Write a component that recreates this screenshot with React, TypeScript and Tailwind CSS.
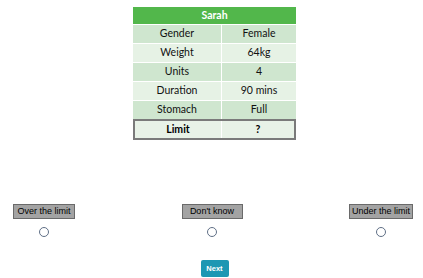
import React from "react";

const rows: [string, string][] = [
  ["Gender", "Female"],
  ["Weight", "64kg"],
  ["Units", "4"],
  ["Duration", "90 mins"],
  ["Stomach", "Full"],
];

function Choice({ label, w }: { label: string; w: string }) {
  return (
    <div className="flex flex-col items-center">
      <div className={`h-[15px] border border-[#6a6a6a] bg-[#a3a3a3] text-center text-[9px] leading-[13px] text-black whitespace-nowrap ${w}`} style={{ fontFamily: "'Liberation Sans', Arial, sans-serif" }}>
        {label}
      </div>
      <div className="mt-[8px] h-[10px] w-[10px] rounded-full border border-[#5f6f86] bg-white" />
    </div>
  );
}

export default function App() {
  return (
    <div className="relative h-[278px] w-[423px] bg-white" style={{ fontFamily: "Lato, 'Noto Sans', sans-serif" }}>
      <div className="flex justify-center pl-[6px] pt-[7px]">
        <div className="w-[163px] text-[10.5px] text-[#111]">
          <div className="flex h-[17px] items-center justify-center bg-[#52b74b] font-bold text-white">Sarah</div>
          {rows.map(([a, b], i) => (
            <div key={a} className={`flex h-[19px] border-t border-white ${i % 2 === 0 ? "bg-[#cfe6cf]" : "bg-[#e6f2e5]"}`}>
              <div className="flex w-[89px] items-center justify-center border-r border-white">{a}</div>
              <div className="flex flex-1 items-center justify-center">{b}</div>
            </div>
          ))}
          <div className="flex h-[21px] border-2 border-[#7a7a7a] bg-[#e8f2e7] font-bold text-black">
            <div className="flex w-[87px] items-center justify-center border-r border-white">Limit</div>
            <div className="flex flex-1 items-center justify-center">?</div>
          </div>
        </div>
      </div>
      <div className="mt-[64px] flex justify-between pl-[13px] pr-[10px]">
        <Choice label="Over the limit" w="w-[62px]" />
        <Choice label="Don't know" w="w-[61px]" />
        <Choice label="Under the limit" w="w-[64px]" />
      </div>
      <div className="mt-[23px] flex justify-center pl-[6px]">
        <div className="flex h-[17px] w-[28px] items-center justify-center rounded-[2px] bg-[#1d97b3] text-[7.5px] font-bold text-white" style={{ fontFamily: "'Liberation Sans', Arial, sans-serif" }}>
          Next
        </div>
      </div>
    </div>
  );
}
